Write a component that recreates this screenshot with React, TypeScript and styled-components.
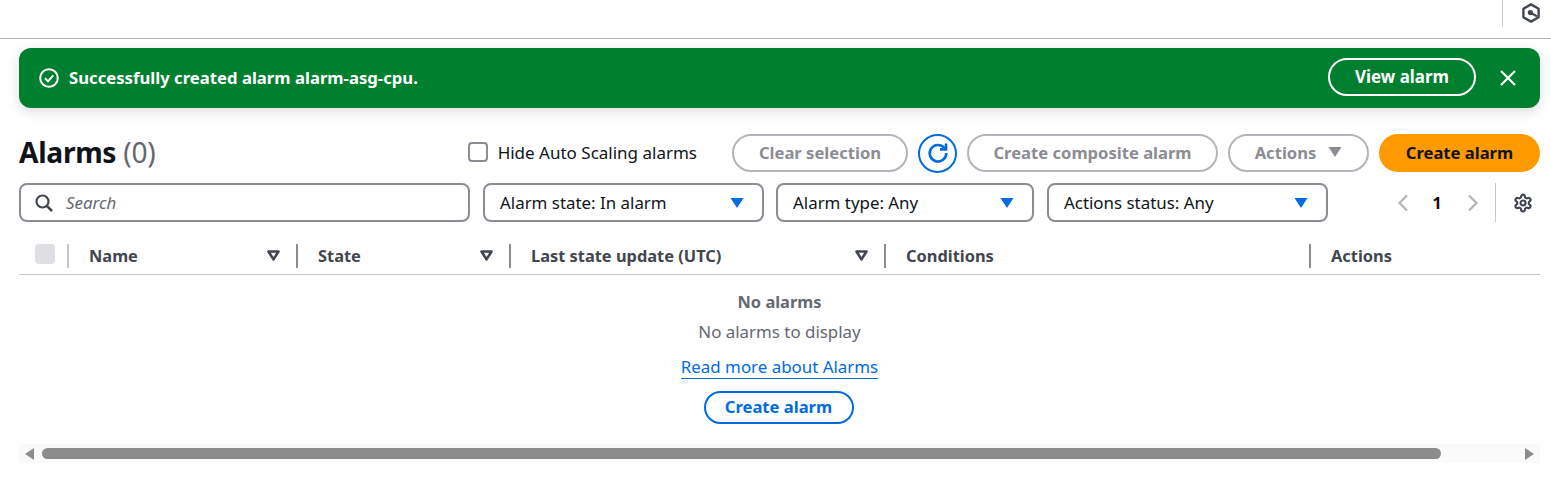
import React from "react";
import styled, { createGlobalStyle } from "styled-components";

const FONT = '"Noto Sans", "Open Sans", Arial, sans-serif';
const TEXT_SIZE = "16.7px";

const GlobalStyle = createGlobalStyle`
  html, body {
    margin: 0;
    padding: 0;
    background: #ffffff;
    font-family: ${FONT};
    color: #0f141a;
    overflow: hidden;
  }
  * { box-sizing: border-box; }
`;

const TopBar = styled.div`
  height: 39px;
  border-bottom: 1px solid #b4b4bb;
  display: flex;
  justify-content: flex-end;
  align-items: flex-start;
  padding-right: 11px;
`;

const TopBarItem = styled.div`
  width: 38px;
  height: 26px;
  border-left: 1px solid #c6c6cd;
  display: flex;
  align-items: center;
  justify-content: flex-end;
`;

const Page = styled.div`
  padding: 9px 11px 0 19px;
`;

const Flash = styled.div`
  height: 60px;
  border-radius: 12px;
  background: #00802f;
  color: #ffffff;
  display: flex;
  align-items: center;
  padding: 0 23px 0 20px;
  box-shadow: 0 4px 12px rgba(15, 20, 26, 0.14);
`;

const FlashText = styled.div`
  flex: 1;
  margin-left: 10px;
  padding-bottom: 2px;
  font-size: ${TEXT_SIZE};
  font-weight: 700;
`;

const FlashButton = styled.div`
  width: 148px;
  height: 38px;
  border: 2px solid #ffffff;
  border-radius: 20px;
  display: flex;
  align-items: center;
  justify-content: center;
  padding-bottom: 2px;
  font-size: 16.9px;
  font-weight: 700;
  margin-right: 23px;
  margin-top: -2px;
`;

const Toolbar = styled.div`
  margin-top: 26px;
  height: 38px;
  display: flex;
  align-items: center;
`;

const Heading = styled.h1`
  flex: 1;
  margin: -2px 0 0;
  font-size: 28.2px;
  font-weight: 700;
  letter-spacing: -0.3px;
  line-height: 38px;
`;

const Count = styled.span`
  font-weight: 400;
  color: #656871;
`;

const Checkbox = styled.span`
  width: 20px;
  height: 20px;
  border: 2px solid #8c8c94;
  border-radius: 4px;
  display: block;
`;

const DisabledBox = styled.span`
  width: 20px;
  height: 20px;
  border-radius: 4px;
  background: #dedee3;
  display: block;
`;

const CheckLabel = styled.label`
  display: flex;
  align-items: center;
  gap: 10px;
  font-size: 17px;
  color: #0f141a;
  margin-right: 35px;
  margin-top: -2px;
`;

const Buttons = styled.div`
  display: flex;
  gap: 10px;
  align-items: center;
`;

const Pill = styled.div<{ $w: number; $variant?: "disabled" | "primary" | "normal" }>`
  width: ${(p) => p.$w}px;
  height: 38px;
  padding-bottom: 2px;
  border-radius: 20px;
  display: flex;
  align-items: center;
  justify-content: center;
  gap: 12px;
  font-size: 16.6px;
  font-weight: 700;
  ${(p) =>
    p.$variant === "primary"
      ? "background:#ff9900;color:#0f141a;"
      : p.$variant === "normal"
        ? "border:2px solid #006ce0;color:#006ce0;"
        : "border:2px solid #b4b4bb;color:#8c8c94;"}
`;

const RefreshButton = styled.div`
  width: 39px;
  height: 39px;
  border-radius: 50%;
  border: 2px solid #006ce0;
  display: flex;
  align-items: center;
  justify-content: center;
`;

const Filters = styled.div`
  margin-top: 11px;
  height: 39px;
  display: flex;
  align-items: center;
`;

const SearchBox = styled.div`
  width: 451px;
  height: 39px;
  border: 2px solid #8c8c94;
  border-radius: 8px;
  display: flex;
  align-items: center;
  gap: 13px;
  padding-left: 14px;
  font-size: 16.9px;
  font-style: italic;
  color: #656871;
`;

const Select = styled.div<{ $w: number; $ml: number }>`
  width: ${(p) => p.$w}px;
  height: 39px;
  margin-left: ${(p) => p.$ml}px;
  border: 2px solid #8c8c94;
  border-radius: 8px;
  display: flex;
  align-items: center;
  justify-content: space-between;
  padding: 0 18px 0 15px;
  font-size: 16.9px;
  color: #0f141a;
`;

const Pager = styled.div`
  margin-left: auto;
  display: flex;
  align-items: center;
  height: 39px;
  padding-right: 7px;
`;

const PageNumber = styled.span`
  width: 56px;
  margin-right: 2px;
  text-align: center;
  font-size: ${TEXT_SIZE};
  font-weight: 700;
`;

const PagerDivider = styled.span`
  width: 1px;
  height: 39px;
  background: #c6c6cd;
  margin: 0 17px 0 16px;
`;

const TableHead = styled.div`
  margin-top: 14px;
  height: 39px;
  border-bottom: 1px solid #c6c6cd;
  display: grid;
  grid-template-columns: 50px 229px 213px 375px 425px 1fr;
  align-items: center;
`;

const HeadCell = styled.div<{ $first?: boolean }>`
  height: 24px;
  margin-top: 1px;
  display: flex;
  align-items: center;
  justify-content: space-between;
  padding: 0 16px 0 20px;
  font-size: 16.4px;
  font-weight: 700;
  color: #424650;
  border-right: 2px solid #8c8c94;
  &:last-child { border-right: none; }
  ${(p) => (p.$first ? "padding:0 0 0 16px;border-right:2px solid #c6c6cd;align-items:flex-start;" : "")}
`;

const Empty = styled.div`
  display: flex;
  flex-direction: column;
  align-items: center;
  color: #656871;
  font-size: 16.9px;
`;

const EmptyTitle = styled.div`
  margin-top: 16px;
  height: 22px;
  line-height: 22px;
  font-size: 16.4px;
  font-weight: 700;
`;

const EmptyText = styled.div`
  margin-top: 8px;
  height: 22px;
  line-height: 22px;
`;

const DocLink = styled.a`
  margin-top: 13px;
  height: 23px;
  line-height: 22px;
  color: #006ce0;
  border-bottom: 1px solid #006ce0;
`;

const OutlineAction = styled(Pill)`
  height: 33px;
  margin-top: 12px;
  margin-right: 2px;
`;

const ScrollTrack = styled.div`
  margin-top: 20px;
  height: 19px;
  background: #fafafa;
  display: flex;
  align-items: center;
  padding: 0 6px;
  gap: 8px;
`;

const ScrollThumb = styled.div`
  width: 1399px;
  height: 11px;
  border-radius: 6px;
  background: #8c8c8c;
  margin-right: auto;
`;

const Tri = styled.svg`
  flex: none;
  display: block;
`;

const Caret = ({ color, w = 14 }: { color: string; w?: number }) => (
  <Tri width={w} height={12} viewBox="0 0 14 12">
    <path d="M0.5 1h13L7 11z" fill={color} />
  </Tri>
);

const SortIcon = () => (
  <Tri width={13} height={11} viewBox="0 0 13 11">
    <path d="M1.5 1.5h10L6.5 9.4z" fill="none" stroke="#424650" strokeWidth="2.6" strokeLinejoin="round" />
  </Tri>
);

const Chevron = ({ dir }: { dir: "l" | "r" }) => (
  <Tri width={12} height={18} viewBox="0 0 12 18">
    <path d={dir === "l" ? "M10 1.5 2.5 9l7.5 7.5" : "M2 1.5 9.5 9 2 16.5"} fill="none" stroke="#b4b4bb" strokeWidth="2.2" />
  </Tri>
);

export default function App() {
  return (
    <>
      <GlobalStyle />
      <TopBar>
        <TopBarItem>
          <Tri width={18} height={20} viewBox="0 0 18 20">
            <path d="M9 1.4 16.6 5.7v8.6L9 18.6 1.4 14.3V5.7z" fill="none" stroke="#424650" strokeWidth="2.4" strokeLinejoin="round" />
            <circle cx="8.4" cy="9.6" r="2.6" fill="#424650" />
            <path d="M8.6 9.8l6.4 3.6" stroke="#424650" strokeWidth="2.2" />
          </Tri>
        </TopBarItem>
      </TopBar>
      <Page>
        <Flash>
          <Tri width={20} height={20} viewBox="0 0 20 20">
            <circle cx="10" cy="10" r="8.8" fill="none" stroke="#fff" strokeWidth="2" />
            <path d="M6 10.3l3 3 5.2-6" fill="none" stroke="#fff" strokeWidth="2" />
          </Tri>
          <FlashText>Successfully created alarm alarm-asg-cpu.</FlashText>
          <FlashButton>View alarm</FlashButton>
          <Tri width={18} height={18} viewBox="0 0 18 18">
            <path d="M2 2l14 14M16 2 2 16" stroke="#fff" strokeWidth="2.2" />
          </Tri>
        </Flash>

        <Toolbar>
          <Heading>
            Alarms <Count>(0)</Count>
          </Heading>
          <CheckLabel>
            <Checkbox />
            Hide Auto Scaling alarms
          </CheckLabel>
          <Buttons>
            <Pill $w={176}>Clear selection</Pill>
            <RefreshButton>
              <Tri width={22} height={22} viewBox="0 0 22 22">
                <path d="M17.6 6.2A8.3 8.3 0 1 0 19.3 11" fill="none" stroke="#006ce0" strokeWidth="2.6" />
                <path d="M19 1.4V7.4H13" fill="none" stroke="#006ce0" strokeWidth="2.6" />
              </Tri>
            </RefreshButton>
            <Pill $w={251}>Create composite alarm</Pill>
            <Pill $w={141}>
              Actions
              <Caret color="#8c8c94" />
            </Pill>
            <Pill $w={161} $variant="primary">
              Create alarm
            </Pill>
          </Buttons>
        </Toolbar>

        <Filters>
          <SearchBox>
            <Tri width={18} height={18} viewBox="0 0 18 18">
              <circle cx="7.5" cy="7.5" r="6" fill="none" stroke="#424650" strokeWidth="2.2" />
              <path d="M11.8 11.8 17 17" stroke="#424650" strokeWidth="2.6" />
            </Tri>
            Search
          </SearchBox>
          <Select $w={281} $ml={13}>
            Alarm state: In alarm
            <Caret color="#006ce0" />
          </Select>
          <Select $w={258} $ml={12}>
            Alarm type: Any
            <Caret color="#006ce0" />
          </Select>
          <Select $w={281} $ml={13}>
            Actions status: Any
            <Caret color="#006ce0" />
          </Select>
          <Pager>
            <Chevron dir="l" />
            <PageNumber>1</PageNumber>
            <Chevron dir="r" />
            <PagerDivider />
            <Tri width={20} height={20} viewBox="0 0 24 24">
              <path
                d="M12.22 2h-.44a2 2 0 0 0-2 2v.18a2 2 0 0 1-1 1.73l-.43.25a2 2 0 0 1-2 0l-.15-.08a2 2 0 0 0-2.73.73l-.22.38a2 2 0 0 0 .73 2.73l.15.1a2 2 0 0 1 1 1.72v.51a2 2 0 0 1-1 1.74l-.15.09a2 2 0 0 0-.73 2.73l.22.38a2 2 0 0 0 2.73.73l.15-.08a2 2 0 0 1 2 0l.43.25a2 2 0 0 1 1 1.73V20a2 2 0 0 0 2 2h.44a2 2 0 0 0 2-2v-.18a2 2 0 0 1 1-1.73l.43-.25a2 2 0 0 1 2 0l.15.08a2 2 0 0 0 2.73-.73l.22-.39a2 2 0 0 0-.73-2.73l-.15-.08a2 2 0 0 1-1-1.74v-.5a2 2 0 0 1 1-1.74l.15-.09a2 2 0 0 0 .73-2.73l-.22-.38a2 2 0 0 0-2.73-.73l-.15.08a2 2 0 0 1-2 0l-.43-.25a2 2 0 0 1-1-1.73V4a2 2 0 0 0-2-2z"
                fill="none"
                stroke="#424650"
                strokeWidth="2.6"
              />
              <circle cx="12" cy="12" r="3" fill="none" stroke="#424650" strokeWidth="2.6" />
            </Tri>
          </Pager>
        </Filters>

        <TableHead>
          <HeadCell $first>
            <DisabledBox />
          </HeadCell>
          <HeadCell>
            Name
            <SortIcon />
          </HeadCell>
          <HeadCell>
            State
            <SortIcon />
          </HeadCell>
          <HeadCell>
            Last state update (UTC)
            <SortIcon />
          </HeadCell>
          <HeadCell>Conditions</HeadCell>
          <HeadCell>Actions</HeadCell>
        </TableHead>

        <Empty>
          <EmptyTitle>No alarms</EmptyTitle>
          <EmptyText>No alarms to display</EmptyText>
          <DocLink>Read more about Alarms</DocLink>
          <OutlineAction $w={150} $variant="normal">
            Create alarm
          </OutlineAction>
        </Empty>

        <ScrollTrack>
          <Tri width={9} height={12} viewBox="0 0 9 12">
            <path d="M9 0v12L0 6z" fill="#8c8c8c" />
          </Tri>
          <ScrollThumb />
          <Tri width={9} height={12} viewBox="0 0 9 12">
            <path d="M0 0v12l9-6z" fill="#8c8c8c" />
          </Tri>
        </ScrollTrack>
      </Page>
    </>
  );
}
